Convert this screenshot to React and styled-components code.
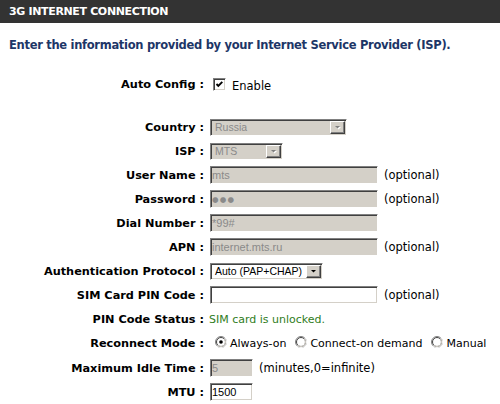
import React from 'react';
import styled, { createGlobalStyle } from 'styled-components';

const Global = createGlobalStyle`
  html, body { margin: 0; padding: 0; background: #fff; }
  body { font-family: "DejaVu Sans", Verdana, sans-serif; }
`;

const Page = styled.div`
  width: 500px;
  height: 404px;
  overflow: hidden;
  background: #fff;
`;

const Header = styled.div`
  height: 23px;
  background: #333333;
  color: #fff;
  font: bold 11px "DejaVu Sans", Verdana, sans-serif;
  letter-spacing: -0.35px;
  line-height: 23px;
  padding-left: 9px;
`;

const Intro = styled.p`
  margin: 0;
  padding: 15px 0 18px 9px;
  height: 16px;
  line-height: 16px;
  color: #1d3667;
  font: bold 11.5px "DejaVu Sans", Verdana, sans-serif;
  letter-spacing: -0.3px;
  white-space: nowrap;
`;

const Form = styled.div`
  display: flex;
  flex-direction: column;
`;

const Row = styled.div`
  display: grid;
  grid-template-columns: 204px 1fr;
  column-gap: 6px;
  align-items: center;
  height: ${(p) => p.$h || 24}px;
`;

const Label = styled.div`
  text-align: right;
  font: bold 11.3px "DejaVu Sans", Verdana, sans-serif;
  color: #000;
  white-space: nowrap;
`;

const Value = styled.div`
  display: flex;
  align-items: center;
  white-space: nowrap;
`;

const Text = styled.span`
  font: 11.5px "DejaVu Sans", Verdana, sans-serif;
  color: ${(p) => p.$color || '#000'};
  margin-left: ${(p) => p.$ml || 0}px;
`;

const Status = styled.span`
  font: 11px "DejaVu Sans", Verdana, sans-serif;
  color: #2f7d1c;
  margin-left: -1px;
`;

const Input = styled.input`
  box-sizing: border-box;
  width: ${(p) => p.$w}px;
  height: 18px;
  margin: 0;
  padding: 0 1px;
  border: 1px solid;
  border-color: #808080 #ffffff #ffffff #808080;
  box-shadow: inset 1px 1px 0 #404040, inset -1px -1px 0 #d4d0c8;
  background: ${(p) => (p.disabled ? '#d4d0c8' : '#fff')};
  color: ${(p) => (p.disabled ? '#8a8a8a' : '#000')};
  font: ${(p) => (p.$dots ? '7.5px "DejaVu Sans", sans-serif' : '11px "Liberation Sans", Arial, sans-serif')};
  letter-spacing: ${(p) => (p.$dots ? '1.2px' : '0')};
  outline: none;
  -webkit-text-fill-color: ${(p) => (p.disabled ? '#8a8a8a' : '#000')};
  opacity: 1;
`;

const SelectBox = styled.div`
  box-sizing: border-box;
  width: ${(p) => p.$w}px;
  height: 17px;
  display: flex;
  align-items: stretch;
  border: 1px solid;
  border-color: #808080 #ffffff #ffffff #808080;
  box-shadow: inset 1px 1px 0 #404040, inset -1px -1px 0 #d4d0c8;
  background: ${(p) => (p.$disabled ? '#d4d0c8' : '#fff')};
  padding: 1px;
`;

const SelectText = styled.span`
  flex: 1;
  padding-left: 3px;
  font: 10.5px "Liberation Sans", Arial, sans-serif;
  line-height: 13px;
  overflow: hidden;
  color: ${(p) => (p.$disabled ? '#8a8a8a' : '#000')};
`;

const DropButton = styled.span`
  box-sizing: border-box;
  width: 15px;
  flex: none;
  display: flex;
  align-items: center;
  justify-content: center;
  background: #d4d0c8;
  border: 1px solid;
  border-color: #ffffff #404040 #404040 #ffffff;
  box-shadow: inset -1px -1px 0 #808080;
`;

const CheckBox = styled.span`
  box-sizing: border-box;
  width: 13px;
  height: 13px;
  margin: 0 0 0 3px;
  display: inline-flex;
  border: 1px solid;
  border-color: #808080 #ffffff #ffffff #808080;
  box-shadow: inset 1px 1px 0 #404040, inset -1px -1px 0 #d4d0c8;
  background: #fff;
`;

const CheckLabel = styled.span`
  font: 11.5px "DejaVu Sans", Verdana, sans-serif;
  margin-left: 6px;
  margin-top: 3px;
`;

const RadioGroup = styled.div`
  display: flex;
  align-items: center;
  gap: 9px;
  padding-left: 5px;
`;

const RadioOption = styled.label`
  display: inline-flex;
  align-items: center;
  gap: 3px;
  font: 11px "DejaVu Sans", Verdana, sans-serif;
  color: #000;
  svg { margin-top: -3px; }
`;

const Arrow = ({ disabled }) => (
  <svg width="7" height="5" viewBox="0 0 7 5">
    {disabled && <path d="M2 2 H7 L4.5 4.5 Z" fill="#fff" />}
    <path d="M1 1 H6 L3.5 3.5 Z" fill={disabled ? '#808080' : '#000'} />
  </svg>
);

const Select = ({ w, value, disabled }) => (
  <SelectBox $w={w} $disabled={disabled}>
    <SelectText $disabled={disabled}>{value}</SelectText>
    <DropButton>
      <Arrow disabled={disabled} />
    </DropButton>
  </SelectBox>
);

const Radio = ({ checked }) => (
  <svg width="12" height="12" viewBox="0 0 12 12">
    <circle cx="6" cy="6" r="5.5" fill="none" stroke="#808080" />
    <path d="M9.9 2.1 A5.5 5.5 0 0 1 2.1 9.9" fill="none" stroke="#ffffff" />
    <circle cx="6" cy="6" r="4.5" fill="#fff" stroke="#404040" />
    <path d="M9.2 2.8 A4.5 4.5 0 0 1 2.8 9.2" fill="none" stroke="#d4d0c8" />
    {checked && <circle cx="6" cy="6" r="1.8" fill="#000" />}
  </svg>
);

const Field = ({ label, children, h }) => (
  <Row $h={h}>
    <Label>{label} :</Label>
    <Value>{children}</Value>
  </Row>
);

const Spacer = styled.div`
  height: 19px;
`;

export default function App() {
  return (
    <>
      <Global />
      <Page>
        <Header>3G INTERNET CONNECTION</Header>
        <Intro>Enter the information provided by your Internet Service Provider (ISP).</Intro>
        <Form>
          <Field label="Auto Config">
            <CheckBox>
              <svg width="11" height="11" viewBox="0 0 11 11">
                <path d="M2.5 5 L4.3 6.8 L8.3 2.8" fill="none" stroke="#000" strokeWidth="1.9" />
              </svg>
            </CheckBox>
            <CheckLabel>Enable</CheckLabel>
          </Field>
          <Spacer />
          <Field label="Country">
            <Select w={137} value="Russia" disabled />
          </Field>
          <Field label="ISP">
            <Select w={73} value="MTS" disabled />
          </Field>
          <Field label="User Name">
            <Input $w={168} disabled defaultValue="mts" />
            <Text $ml={6}>(optional)</Text>
          </Field>
          <Field label="Password">
            <Input $w={168} $dots disabled defaultValue="●●●" />
            <Text $ml={6}>(optional)</Text>
          </Field>
          <Field label="Dial Number">
            <Input $w={168} disabled defaultValue="*99#" />
          </Field>
          <Field label="APN">
            <Input $w={168} disabled defaultValue="internet.mts.ru" />
            <Text $ml={6}>(optional)</Text>
          </Field>
          <Field label="Authentication Protocol">
            <Select w={113} value="Auto (PAP+CHAP)" />
          </Field>
          <Field label="SIM Card PIN Code">
            <Input $w={168} defaultValue="" />
            <Text $ml={6}>(optional)</Text>
          </Field>
          <Field label="PIN Code Status">
            <Status>SIM card is unlocked.</Status>
          </Field>
          <Field label="Reconnect Mode" h={25}>
            <RadioGroup>
              <RadioOption><Radio checked />Always-on</RadioOption>
              <RadioOption><Radio />Connect-on demand</RadioOption>
              <RadioOption><Radio />Manual</RadioOption>
            </RadioGroup>
          </Field>
          <Field label="Maximum Idle Time">
            <Input $w={43} disabled defaultValue="5" />
            <Text $ml={6}>(minutes,0=infinite)</Text>
          </Field>
          <Field label="MTU">
            <Input $w={43} defaultValue="1500" />
          </Field>
        </Form>
      </Page>
    </>
  );
}
